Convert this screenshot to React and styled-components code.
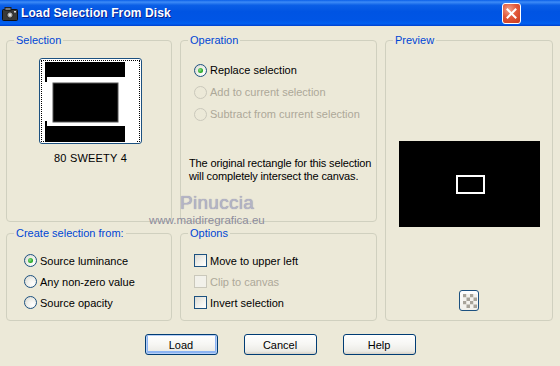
import styled, { createGlobalStyle, css } from "styled-components";

const GlobalStyle = createGlobalStyle`
    html, body {
        margin: 0;
        padding: 0;
        background: #ECE9D8;
    }
    * {
        box-sizing: border-box;
    }
`;

export default function App(){
    return(
        <>
            <GlobalStyle />
            <Window>
                <TitleBar>
                    <TitleIcon width="16" height="14" viewBox="0 0 16 14">
                        <rect x="0.5" y="2.5" width="15" height="11" rx="1" fill="#3a3a3a" stroke="#111" />
                        <rect x="3" y="0.5" width="6" height="3" fill="#777" stroke="#222" />
                        <circle cx="8" cy="8" r="3.2" fill="#9a9a9a" stroke="#222" />
                        <circle cx="8" cy="8" r="1.4" fill="#e0e0e0" />
                        <rect x="12" y="4" width="2" height="1.5" fill="#ddd" />
                    </TitleIcon>
                    <TitleText>Load Selection From Disk</TitleText>
                    <CloseButton>
                        <svg width="11" height="11" viewBox="0 0 11 11">
                            <path d="M1.5 1.5 L9.5 9.5 M9.5 1.5 L1.5 9.5" stroke="#fff" strokeWidth="2" strokeLinecap="square" />
                        </svg>
                    </CloseButton>
                </TitleBar>

                <DialogBody>
                    <GroupBox>
                        <Legend>Selection</Legend>
                        <SelectionContent>
                            <Thumbnail>
                                <ThumbFocus>
                                    <svg width="92" height="80" viewBox="0 0 92 80">
                                        <rect x="0" y="0" width="92" height="80" fill="#fff" />
                                        <rect x="1" y="0" width="79" height="15" fill="#000" />
                                        <rect x="0" y="0" width="2" height="20" fill="#000" />
                                        <rect x="8" y="21" width="65" height="39" fill="#000" stroke="#555" strokeWidth="1" />
                                        <rect x="1" y="64" width="79" height="16" fill="#000" />
                                        <rect x="0" y="59" width="2" height="21" fill="#000" />
                                    </svg>
                                </ThumbFocus>
                            </Thumbnail>
                            <ThumbCaption>80 SWEETY 4</ThumbCaption>
                        </SelectionContent>
                    </GroupBox>

                    <GroupBox>
                        <Legend>Operation</Legend>
                        <OperationContent>
                            <OptionRow $height={22}>
                                <Radio $checked />
                                <OptionLabel>Replace selection</OptionLabel>
                            </OptionRow>
                            <OptionRow $height={22}>
                                <Radio $disabled />
                                <OptionLabel $disabled>Add to current selection</OptionLabel>
                            </OptionRow>
                            <OptionRow $height={22}>
                                <Radio $disabled />
                                <OptionLabel $disabled>Subtract from current selection</OptionLabel>
                            </OptionRow>
                            <InfoText>
                                The original rectangle for this selection<br />
                                will completely intersect the canvas.
                            </InfoText>
                        </OperationContent>
                    </GroupBox>

                    <PreviewBox>
                        <Legend>Preview</Legend>
                        <PreviewContent>
                            <svg width="141" height="86" viewBox="0 0 141 86">
                                <rect x="0" y="0" width="141" height="86" fill="#000" />
                                <rect x="58" y="35" width="27" height="17" fill="none" stroke="#fff" strokeWidth="2" />
                            </svg>
                            <CheckerButton>
                                <svg width="14" height="14" viewBox="0 0 14 14">
                                    {[0, 1, 2, 3].map((r) =>
                                        [0, 1, 2, 3].map((c) => (
                                            <rect
                                                key={`${r}-${c}`}
                                                x={c * 3.5}
                                                y={r * 3.5}
                                                width="3.5"
                                                height="3.5"
                                                fill={(r + c) % 2 === 0 ? "#A8A49A" : "#F4F3EE"}
                                            />
                                        ))
                                    )}
                                </svg>
                            </CheckerButton>
                        </PreviewContent>
                    </PreviewBox>

                    <GroupBox>
                        <Legend>Create selection from:</Legend>
                        <SourceContent>
                            <OptionRow $height={21}>
                                <Radio $checked />
                                <OptionLabel>Source luminance</OptionLabel>
                            </OptionRow>
                            <OptionRow $height={21}>
                                <Radio />
                                <OptionLabel>Any non-zero value</OptionLabel>
                            </OptionRow>
                            <OptionRow $height={21}>
                                <Radio />
                                <OptionLabel>Source opacity</OptionLabel>
                            </OptionRow>
                        </SourceContent>
                    </GroupBox>

                    <GroupBox>
                        <Legend>Options</Legend>
                        <OptionsContent>
                            <OptionRow $height={21}>
                                <Checkbox />
                                <OptionLabel>Move to upper left</OptionLabel>
                            </OptionRow>
                            <OptionRow $height={21}>
                                <Checkbox $disabled />
                                <OptionLabel $disabled>Clip to canvas</OptionLabel>
                            </OptionRow>
                            <OptionRow $height={21}>
                                <Checkbox />
                                <OptionLabel>Invert selection</OptionLabel>
                            </OptionRow>
                        </OptionsContent>
                    </GroupBox>
                </DialogBody>

                <ButtonBar>
                    <DialogButton $default>Load</DialogButton>
                    <DialogButton>Cancel</DialogButton>
                    <DialogButton>Help</DialogButton>
                </ButtonBar>

                <Watermark>
                    <WatermarkName>Pinuccia</WatermarkName>
                    <WatermarkUrl>www.maidiregrafica.eu</WatermarkUrl>
                </Watermark>
            </Window>
        </>
    )
}

const Window = styled.div`
    position: relative;
    width: 560px;
    height: 366px;
    background: #ECE9D8;
    font-family: "Liberation Sans", Arial, sans-serif;
    font-size: 11px;
    color: #000;
    display: flex;
    flex-direction: column;
    overflow: hidden;
`;

const TitleBar = styled.div`
    height: 26px;
    flex-shrink: 0;
    display: flex;
    align-items: center;
    padding: 0 39px 0 2px;
    background: linear-gradient(to bottom,
        #0A5FE8 0%,
        #3D8BF7 8%,
        #0B5FE6 20%,
        #0054E3 45%,
        #0055E5 75%,
        #0160F0 90%,
        #0150E0 96%,
        #003FC8 100%);
`;

const TitleIcon = styled.svg`
    margin-right: 3px;
    margin-top: 1px;
`;

const TitleText = styled.span`
    flex: 1;
    color: #fff;
    font-family: "Liberation Sans", Arial, sans-serif;
    font-weight: bold;
    font-size: 12px;
    letter-spacing: 0.1px;
    text-shadow: 1px 1px 0 #0A1E8C;
`;

const CloseButton = styled.div`
    width: 19px;
    height: 21px;
    border: 1px solid #fff;
    border-radius: 3px;
    background: radial-gradient(circle at 35% 30%, #F2A18A 0%, #E2583A 45%, #C73A1C 100%);
    display: flex;
    align-items: center;
    justify-content: center;
`;

const DialogBody = styled.div`
    display: grid;
    grid-template-columns: 166px 197px 168px;
    grid-template-rows: 182px 88px;
    column-gap: 8px;
    row-gap: 11px;
    padding: 14px 7px 0 6px;
`;

const GroupBox = styled.div`
    position: relative;
    border: 1px solid #D0D0BF;
    border-radius: 4px;
`;

const PreviewBox = styled(GroupBox)`
    grid-column: 3;
    grid-row: 1 / span 2;
`;

const Legend = styled.span`
    position: absolute;
    top: -8px;
    left: 7px;
    padding: 0 2px;
    background: #ECE9D8;
    color: #0046D5;
    font-size: 11px;
    line-height: 14px;
    white-space: nowrap;
`;

const SelectionContent = styled.div`
    display: flex;
    flex-direction: column;
    align-items: center;
    padding: 17px 0 0 3px;
`;

const Thumbnail = styled.div`
    width: 103px;
    height: 86px;
    border: 1px solid #1C5180;
    border-radius: 3px;
    background: #fff;
    padding: 1px;
`;

const ThumbFocus = styled.div`
    width: 100%;
    height: 100%;
    border: 1px dotted #000;
    padding: 1px 0 0 3px;
    display: flex;
    align-items: flex-start;
    justify-content: flex-start;
`;

const ThumbCaption = styled.div`
    margin-top: 8px;
    font-size: 11px;
    line-height: 13px;
    letter-spacing: 0.2px;
`;

const OperationContent = styled.div`
    display: flex;
    flex-direction: column;
    padding: 18px 0 0 13px;
`;

const SourceContent = styled.div`
    display: flex;
    flex-direction: column;
    padding: 16px 0 0 17px;
`;

const OptionsContent = styled.div`
    display: flex;
    flex-direction: column;
    padding: 16px 0 0 13px;
`;

const OptionRow = styled.div`
    display: flex;
    align-items: center;
    height: ${(props) => props.$height}px;
    gap: 3px;
`;

const Radio = styled.span`
    position: relative;
    width: 13px;
    height: 13px;
    flex-shrink: 0;
    border-radius: 50%;
    border: 1px solid ${(props) => props.$disabled ? "#CAC8BB" : "#1C5180"};
    background: ${(props) => props.$disabled
        ? "#ECE9D8"
        : "radial-gradient(circle at 70% 70%, #FFFFFF 0%, #F2F2EE 40%, #D6D5CC 100%)"};
    ${(props) => props.$checked && css`
        &::after {
            content: "";
            position: absolute;
            left: 3px;
            top: 3px;
            width: 5px;
            height: 5px;
            border-radius: 50%;
            background: radial-gradient(circle at 40% 40%, #8CE28A 0%, #29A829 60%, #1D8A1D 100%);
        }
    `}
`;

const Checkbox = styled.span`
    width: 13px;
    height: 13px;
    flex-shrink: 0;
    border: 1px solid ${(props) => props.$disabled ? "#CAC8BB" : "#1C5180"};
    background: ${(props) => props.$disabled
        ? "#F2F1EA"
        : "linear-gradient(135deg, #DCDBD4 0%, #F3F3EF 60%, #FFFFFF 100%)"};
`;

const OptionLabel = styled.span`
    font-size: 11px;
    color: ${(props) => props.$disabled ? "#ACA899" : "#000"};
    white-space: nowrap;
`;

const InfoText = styled.div`
    margin: 32px 0 0 -5px;
    font-size: 11px;
    line-height: 13px;
    letter-spacing: -0.15px;
    white-space: nowrap;
`;

const PreviewContent = styled.div`
    display: flex;
    flex-direction: column;
    align-items: center;
    padding: 100px 0 0 0;
    svg:first-child {
        display: block;
        margin-left: 1px;
    }
`;

const CheckerButton = styled.div`
    margin-top: 63px;
    width: 20px;
    height: 21px;
    border: 1px solid #1C5180;
    border-radius: 3px;
    background: linear-gradient(to bottom, #FFFFFF 0%, #F0F0EA 100%);
    display: flex;
    align-items: center;
    justify-content: center;
`;

const ButtonBar = styled.div`
    display: flex;
    justify-content: center;
    gap: 26px;
    padding-top: 13px;
`;

const DialogButton = styled.button`
    width: 73px;
    height: 21px;
    padding: 0;
    border: 1px solid #003C74;
    border-radius: 3px;
    background: linear-gradient(to bottom, #FFFFFF 0%, #F6F6F3 50%, #ECEBE6 85%, #D6D0C5 100%);
    font-family: "Liberation Sans", Arial, sans-serif;
    font-size: 11px;
    color: #000;
    ${(props) => props.$default && css`
        box-shadow: inset 0 0 0 1px #B7CFF5, inset 0 -1px 0 2px #8CB4F2;
    `}
`;

const Watermark = styled.div`
    position: absolute;
    left: 149px;
    top: 192px;
    display: flex;
    flex-direction: column;
    pointer-events: none;
`;

const WatermarkName = styled.span`
    margin-left: 31px;
    font-family: "Liberation Sans", Arial, sans-serif;
    font-size: 19px;
    line-height: 22px;
    color: #B4B4C6;
    text-shadow: 0 0 1px #8A8AA0;
    letter-spacing: 0.3px;
`;

const WatermarkUrl = styled.span`
    font-family: "Liberation Sans", Arial, sans-serif;
    font-size: 11.5px;
    line-height: 13px;
    color: #8C8C9C;
`;
